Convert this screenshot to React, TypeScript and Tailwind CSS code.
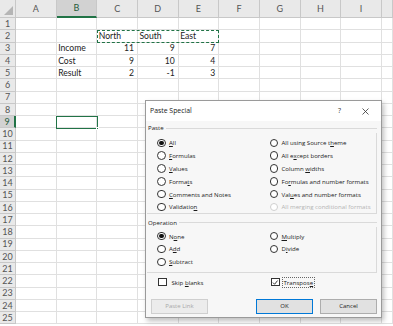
import React from "react";

const COLS = ["A", "B", "C", "D", "E", "F", "G", "H", "I", ""];
const ROWS = Array.from({ length: 25 }, (_, i) => i + 1);

type CellVal = { t: string; r?: boolean };
const DATA: Record<string, CellVal> = {
  C2: { t: "North" },
  D2: { t: "South" },
  E2: { t: "East" },
  B3: { t: "Income" },
  C3: { t: "11", r: true },
  D3: { t: "9", r: true },
  E3: { t: "7", r: true },
  B4: { t: "Cost" },
  C4: { t: "9", r: true },
  D4: { t: "10", r: true },
  E4: { t: "4", r: true },
  B5: { t: "Result" },
  C5: { t: "2", r: true },
  D5: { t: "-1", r: true },
  E5: { t: "3", r: true },
};

function U({ children }: { children: React.ReactNode }) {
  return <span className="underline underline-offset-[1px] decoration-[0.5px]">{children}</span>;
}

function Radio({ checked, disabled, label }: { checked?: boolean; disabled?: boolean; label: React.ReactNode }) {
  return (
    <div className="flex h-[12.8px] items-center gap-[3.5px]">
      <span
        className={`flex h-[8.5px] w-[8.5px] shrink-0 items-center justify-center rounded-full border bg-white ${
          disabled ? "border-[#d0d0d0]" : "border-[#333333]"
        }`}
      >
        {checked && <span className="h-[4.5px] w-[4.5px] rounded-full bg-[#111111]" />}
      </span>
      <span className={`whitespace-nowrap ${disabled ? "text-[#b4b4b4]" : "text-[#1a1a1a]"}`}>{label}</span>
    </div>
  );
}

function GroupLabel({ text }: { text: string }) {
  return (
    <div className="flex h-[10px] items-center">
      <span className="pl-[1px] pr-[2px] text-[#1a1a1a]">{text}</span>
      <span className="h-px flex-1 bg-[#dadada]" />
    </div>
  );
}

function Dialog() {
  return (
    <div
      className="absolute left-[145px] top-[100px] flex h-[218px] w-[237px] flex-col border border-[#9a9a9a] bg-[#f7f7f7] text-[6.1px] shadow-[2px_3px_5px_rgba(0,0,0,0.25)]"
      style={{ fontFamily: '"Open Sans", "Noto Sans", sans-serif' }}
    >
      {/* title bar */}
      <div className="flex h-[20px] items-center bg-white pl-[4px] pr-[12px]">
        <span className="text-[6.9px] text-[#1a1a1a]">Paste Special</span>
        <span className="ml-auto mr-[21px] text-[7px] text-[#333333]">?</span>
        <svg width="7" height="7" viewBox="0 0 7 7" className="block">
          <path d="M0.5 0.5 L6.5 6.5 M6.5 0.5 L0.5 6.5" stroke="#333333" strokeWidth="0.8" />
        </svg>
      </div>

      <div className="flex flex-1 flex-col pl-[1px] pr-[4px] pt-[2px]">
        {/* Paste group */}
        <GroupLabel text="Paste" />
        <div className="grid grid-cols-[112.5px_1fr] border-b border-r border-[#dadada] pl-[10px] pt-[3.5px]">
          <div className="flex flex-col">
            <Radio checked label={<><U>A</U>ll</>} />
            <Radio label={<><U>F</U>ormulas</>} />
            <Radio label={<><U>V</U>alues</>} />
            <Radio label={<>Forma<U>t</U>s</>} />
            <Radio label={<><U>C</U>omments and Notes</>} />
            <Radio label={<>Validatio<U>n</U></>} />
          </div>
          <div className="flex flex-col">
            <Radio label={<>All using Source t<U>h</U>eme</>} />
            <Radio label={<>All e<U>x</U>cept borders</>} />
            <Radio label={<>Column <U>w</U>idths</>} />
            <Radio label={<>Fo<U>r</U>mulas and number formats</>} />
            <Radio label={<>Val<U>u</U>es and number formats</>} />
            <Radio disabled label="All merging conditional formats" />
          </div>
        </div>

        {/* Operation group */}
        <div className="mt-[3px]">
          <GroupLabel text="Operation" />
        </div>
        <div className="grid grid-cols-[112.5px_1fr] border-b border-r border-[#dadada] pb-[4px] pl-[10px] pt-[2.5px]">
          <div className="flex flex-col">
            <Radio checked label={<>N<U>o</U>ne</>} />
            <Radio label={<>A<U>d</U>d</>} />
            <Radio label={<><U>S</U>ubtract</>} />
          </div>
          <div className="flex flex-col">
            <Radio label={<><U>M</U>ultiply</>} />
            <Radio label={<>D<U>i</U>vide</>} />
          </div>
        </div>

        {/* checkboxes */}
        <div className="grid h-[16px] grid-cols-[113px_1fr] items-center pl-[11px] pt-[2px]">
          <div className="flex items-center gap-[5px]">
            <span className="h-[8.5px] w-[8.5px] border border-[#333333] bg-white" />
            <span className="text-[#1a1a1a]">
              Skip <U>b</U>lanks
            </span>
          </div>
          <div className="flex items-center gap-[2px]">
            <span className="flex h-[8.5px] w-[8.5px] items-center justify-center border border-[#333333] bg-white">
              <svg width="7" height="7" viewBox="0 0 7 7">
                <path d="M1 3.6 L2.8 5.4 L6 1.4" stroke="#111" strokeWidth="0.9" fill="none" />
              </svg>
            </span>
            <span className="border border-dotted border-[#666666] px-[1px] leading-[9px] text-[#1a1a1a]">
              Transpos<U>e</U>
            </span>
          </div>
        </div>

        {/* buttons */}
        <div className="mt-[10px] flex items-center pl-[4px] text-[6px]">
          <span className="flex h-[15px] w-[57px] items-center justify-center border border-[#cfcfcf] bg-[#ececec] text-[#a8a8a8]">
            Paste Link
          </span>
          <span className="ml-[48px] flex h-[15px] w-[57px] items-center justify-center border-[1.5px] border-[#0078d7] bg-[#e1e1e1] text-[#1a1a1a]">
            OK
          </span>
          <span className="ml-[7px] flex h-[15px] w-[57px] items-center justify-center border border-[#adadad] bg-[#e1e1e1] text-[#1a1a1a]">
            Cancel
          </span>
        </div>
      </div>
    </div>
  );
}

export default function App() {
  return (
    <div className="relative h-[326px] w-[393px] overflow-hidden bg-white" style={{ fontFamily: 'Lato, "Liberation Sans", sans-serif' }}>
      <div className="grid grid-cols-[16px_repeat(9,40.67px)_1fr] grid-rows-[18px_repeat(25,12.25px)]">
        {/* header row */}
        <div className="relative border-b border-r border-[#c8c8c8] bg-[#e9e9e9]">
          <svg className="absolute bottom-[2px] right-[2px]" width="9" height="9" viewBox="0 0 9 9">
            <path d="M9 0 L9 9 L0 9 Z" fill="#b5b5b5" />
          </svg>
        </div>
        {COLS.map((c) => (
          <div
            key={c || "x"}
            className={`flex items-center justify-center border-r text-[9px] ${
              c === "B"
                ? "border-b-2 border-b-[#217346] border-r-[#c8c8c8] bg-[#d2d2d2] text-[#1e5a3a]"
                : "border-b border-[#c8c8c8] bg-[#e9e9e9] text-[#555555]"
            }`}
          >
            {c}
          </div>
        ))}
        {ROWS.map((r) => (
          <React.Fragment key={r}>
            <div
              className={`flex items-center justify-center border-b text-[9px] ${
                r === 9
                  ? "border-r-2 border-r-[#217346] border-b-[#c8c8c8] bg-[#d2d2d2] text-[#1e5a3a]"
                  : "border-r border-[#c8c8c8] bg-[#e9e9e9] text-[#555555]"
              }`}
            >
              {r}
            </div>
            {COLS.map((c) => {
              const v = DATA[`${c}${r}`];
              return (
                <div
                  key={c || "x"}
                  className={`flex items-end overflow-visible whitespace-nowrap border-b border-r border-[#e0e0e0] pb-[0.5px] text-[8.6px] leading-[10px] text-[#222222] ${
                    v?.r ? "justify-end pr-[3px]" : "pl-[1.5px]"
                  }`}
                >
                  {v?.t}
                </div>
              );
            })}
          </React.Fragment>
        ))}
      </div>

      {/* copy marquee around C2:E2 */}
      <div className="pointer-events-none absolute left-[96.5px] top-[29.5px] h-[13.5px] w-[122.5px] border border-dashed border-[#217346]" />
      {/* selected cell B9 */}
      <div className="pointer-events-none absolute left-[56px] top-[115.5px] h-[13px] w-[41.5px] border-[1.5px] border-[#217346]">
        <span className="absolute -bottom-[2.5px] -right-[2.5px] h-[3.5px] w-[3.5px] border border-white bg-[#217346]" />
      </div>

      <Dialog />
    </div>
  );
}
